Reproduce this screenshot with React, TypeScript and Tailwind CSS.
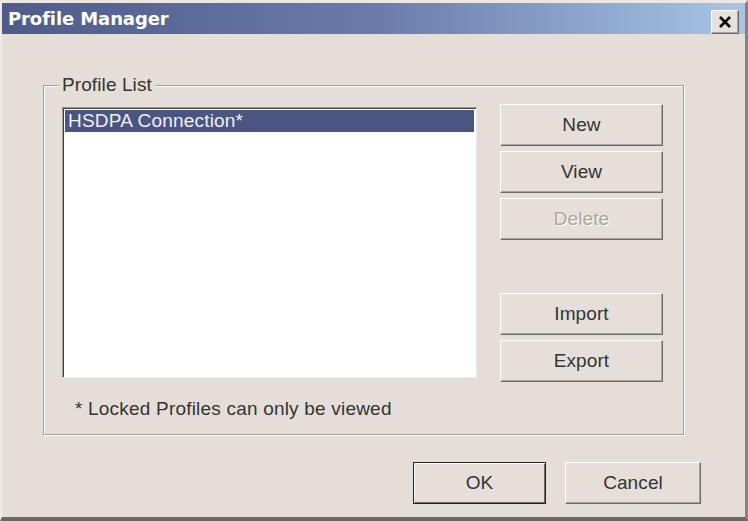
const ui = "font-['Liberation_Sans',Arial,sans-serif]";

const raised =
  "border-t border-l border-t-white border-l-white border-b border-r border-b-[#6f6a65] border-r-[#6f6a65] shadow-[inset_-1px_-1px_0_#aaa49e]";

function SideButton({ label, disabled = false }: { label: string; disabled?: boolean }) {
  return (
    <button
      className={`h-[42px] w-[163px] bg-[#e6dfd9] text-[19px] tracking-[0.1px] ${raised} ${
        disabled ? "text-[#aca6a1] [text-shadow:1px_1px_0_#fff]" : "text-[#333]"
      }`}
    >
      {label}
    </button>
  );
}

export default function App() {
  return (
    <div className={`w-[748px] h-[521px] bg-[#e5ded8] flex flex-col border-t-[3px] border-t-[#ece7e2] border-b-[4px] border-b-[#6d6762] border-l-2 border-l-[#efeae6] border-r-[3px] border-r-[#8a847f] ${ui}`}>
      {/* title bar */}
      <div className="h-[31px] shrink-0 flex items-center justify-between pl-[6px] pr-[6px] bg-gradient-to-r from-[#4f5b8b] via-[#6a7bab] to-[#a9c5e6]">
        <span className="text-white font-bold text-[18px] font-['DejaVu_Sans',sans-serif] tracking-[-0.1px]">
          Profile Manager
        </span>
        <div className={`w-[28px] h-[24px] mt-[8px] mb-[2px] flex items-center justify-center bg-[#e6e1dc] ${raised}`}>
          <svg width="14" height="12" viewBox="0 0 14 12">
            <path d="M2 1 L12 11 M12 1 L2 11" stroke="#000" strokeWidth="2.6" />
          </svg>
        </div>
      </div>

      {/* body */}
      <div className="flex-1 flex flex-col pl-[41px] pt-[51px]">
        <div className="relative w-[641px] h-[350px] border border-[#a29d98] shadow-[1px_1px_0_#fff,inset_1px_1px_0_#fff] pl-[18px] pt-[18px]">
          <span className="absolute left-[15px] -top-[12px] px-[3px] bg-[#e5ded8] text-[19px] leading-[22px] text-[#333] tracking-[0.1px]">
            Profile List
          </span>
          <div className="flex gap-[23px]">
            <div className="mt-[3px] w-[415px] h-[271px] bg-white border border-t-[#9f9a95] border-l-[#9f9a95] border-b-[#eee9e5] border-r-[#eee9e5] shadow-[inset_1px_1px_0_#404040] pt-[2px] pl-[2px] pr-[2px]">
              <div className="h-[22px] bg-[#4b5582] text-[#eef0f6] text-[19px] leading-[22px] pl-[3px] tracking-[0.2px]">
                HSDPA Connection*
              </div>
            </div>
            <div className="flex flex-col">
              <div className="flex flex-col gap-[5px]">
                <SideButton label="New" />
                <SideButton label="View" />
                <SideButton label="Delete" disabled />
              </div>
              <div className="flex flex-col gap-[5px] mt-[53px]">
                <SideButton label="Import" />
                <SideButton label="Export" />
              </div>
            </div>
          </div>
          <p className="mt-[17px] pl-[13px] text-[19px] leading-[20px] text-[#333] tracking-[0.2px]">
            * Locked Profiles can only be viewed
          </p>
        </div>

        <div className="flex justify-end gap-[19px] pr-[44px] mt-[27px]">
          <button className="h-[42px] w-[133px] bg-[#e6dfd9] border border-[#222] text-[19px] text-[#333] tracking-[0.1px] shadow-[inset_1px_1px_0_#fff,inset_-1px_-1px_0_#6f6a65]">
            OK
          </button>
          <button className={`h-[42px] w-[136px] bg-[#e6dfd9] text-[19px] text-[#333] tracking-[0.1px] ${raised}`}>
            Cancel
          </button>
        </div>
      </div>
    </div>
  );
}
